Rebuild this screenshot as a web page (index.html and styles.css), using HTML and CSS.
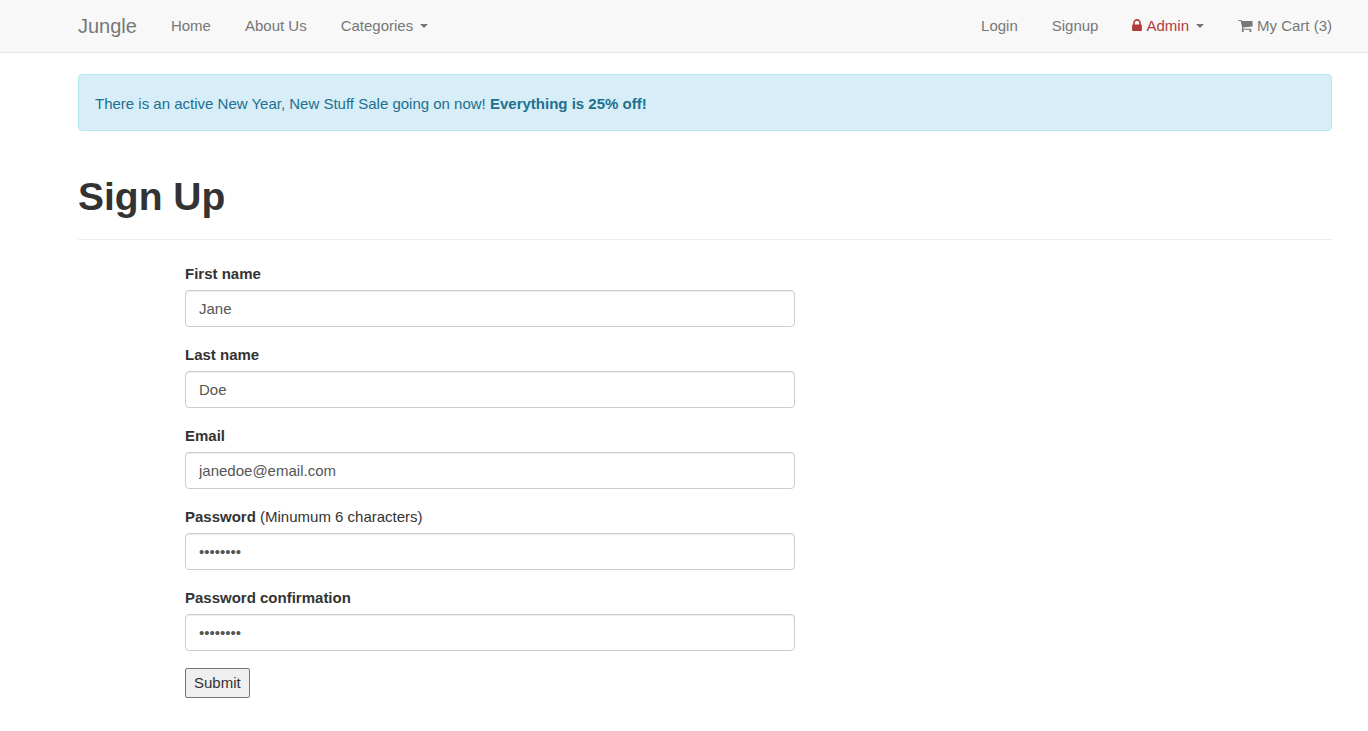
FILE: index.html
```html
<!DOCTYPE html>
<html lang="en">
<head>
<meta charset="utf-8">
<meta name="viewport" content="width=device-width, initial-scale=1">
<title>Jungle</title>
<link rel="stylesheet" href="styles.css">
</head>
<body>
<nav class="navbar">
  <a class="brand" href="#">Jungle</a>
  <div class="nav-links">
    <a href="#">Home</a>
    <a href="#">About Us</a>
    <a href="#">Categories<span class="caret"></span></a>
  </div>
  <div class="nav-links nav-right">
    <a href="#">Login</a>
    <a href="#">Signup</a>
    <a href="#"><span class="admin"><svg class="lock" viewBox="0 128 1152 1408" aria-hidden="true"><path fill="currentColor" d="M320 768h512v-192q0-106-75-181t-181-75-181 75-75 181v192zm832 96v576q0 40-28 68t-68 28h-960q-40 0-68-28t-28-68v-576q0-40 28-68t68-28h32v-192q0-184 132-316t316-132 316 132 132 316v192h32q40 0 68 28t28 68z"/></svg>Admin</span><span class="caret"></span></a>
    <a href="#"><svg class="cart" viewBox="64 256 1664 1408" aria-hidden="true"><path fill="currentColor" d="M704 1536q0 52-38 90t-90 38-90-38-38-90 38-90 90-38 90 38 38 90zm896 0q0 52-38 90t-90 38-90-38-38-90 38-90 90-38 90 38 38 90zm128-1088v512q0 24-16.500 42.500t-40.500 21.500l-1044 122q13 60 13 70 0 16-24 64h920q26 0 45 19t19 45-19 45-45 19h-1024q-26 0-45-19t-19-45q0-11 8-31.500t16-36 21.500-40 15.500-29.500l-177-823h-204q-26 0-45-19t-19-45 19-45 45-19h256q16 0 28.500 6.500t19.500 15.500 13 24.500 8 26 5.500 29.500 4.500 26h1201q26 0 45 19t19 45z"/></svg>My Cart (3)</a>
  </div>
</nav>
<main class="container">
  <div class="alert">There is an active New Year, New Stuff Sale going on now! <strong>Everything is 25% off!</strong></div>
  <header class="page-header"><h1>Sign Up</h1></header>
  <form class="signup">
    <div class="field">
      <label for="first"><b>First name</b></label>
      <input id="first" type="text" value="Jane">
    </div>
    <div class="field">
      <label for="last"><b>Last name</b></label>
      <input id="last" type="text" value="Doe">
    </div>
    <div class="field">
      <label for="email"><b>Email</b></label>
      <input id="email" type="email" value="janedoe@email.com">
    </div>
    <div class="field">
      <label for="password"><b>Password</b> (Minumum 6 characters)</label>
      <input id="password" type="password" value="password">
    </div>
    <div class="field">
      <label for="confirm"><b>Password confirmation</b></label>
      <input id="confirm" type="password" value="password">
    </div>
    <button class="submit" type="submit">Submit</button>
  </form>
</main>
</body>
</html>
```
FILE: styles.css
```css
* { box-sizing: border-box; }

body {
  margin: 0;
  background: #fff;
  color: #333;
  font: 15px/22px "Liberation Sans", Arial, sans-serif;
}

.navbar {
  display: flex;
  align-items: center;
  gap: 34px;
  padding: 15px 36px 15px 78px;
  background: #f8f8f8;
  border-bottom: 1px solid #e7e7e7;
}

.navbar a {
  color: #777;
  text-decoration: none;
  white-space: nowrap;
}

.navbar .brand { font-size: 20px; }

.nav-links {
  display: flex;
  gap: 34px;
}

.nav-right { margin-left: auto; }

.caret {
  display: inline-block;
  margin-left: 7px;
  vertical-align: 3px;
  border-top: 4px solid;
  border-left: 4px solid transparent;
  border-right: 4px solid transparent;
}

.admin { color: #b13c3c; }

.lock {
  width: 10px;
  height: 12px;
  margin-right: 4px;
}

.cart {
  width: 15px;
  height: 12px;
  margin-right: 4px;
  vertical-align: -1px;
}

.container { padding: 21px 36px 32px 78px; }

.alert {
  padding: 18px 16px 15px;
  background: #d7edf7;
  border: 1px solid #b5e8ef;
  border-radius: 4px;
  color: #21708f;
}

.page-header {
  margin: 44px 0 23px;
  padding-bottom: 20px;
  border-bottom: 1px solid #eee;
}

.page-header h1 {
  margin: 0;
  font-size: 39px;
  line-height: 44px;
}

.signup {
  max-width: 717px;
  padding-left: 107px;
}

.field { margin-bottom: 17px; }

.field label {
  display: block;
  margin-bottom: 5px;
}

.field input {
  display: block;
  width: 100%;
  height: 37px;
  padding: 6px 13px;
  background: #fff;
  border: 1px solid #ccc;
  border-radius: 4px;
  box-shadow: inset 0 1px 1px rgba(0, 0, 0, .075);
  color: #555;
  font: inherit;
}

.submit {
  display: block;
  padding: 3px 8px;
  background: #efefef;
  border: 1px solid #767676;
  border-radius: 2px;
  color: #333;
  font: inherit;
}
```
